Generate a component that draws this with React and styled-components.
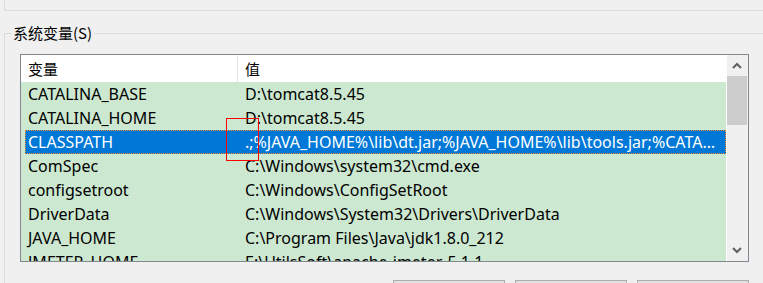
import React from "react";
import styled, { createGlobalStyle } from "styled-components";

const Global = createGlobalStyle`
  html, body { margin: 0; padding: 0; background: #f0f0f0; overflow: hidden; }
  body { font-family: "Noto Sans", "Noto Sans CJK SC", sans-serif; font-size: 16px; color: #000; }
`;

const Page = styled.div`
  width: 763px;
  height: 283px;
  overflow: hidden;
`;

const PrevGroup = styled.div`
  height: 10px;
  margin-left: 4px;
  border-left: 1px solid #dcdcdc;
  border-bottom: 1px solid #dcdcdc;
`;

const Group = styled.div`
  margin-top: 22px;
  margin-left: 4px;
  border-top: 1px solid #dcdcdc;
  border-left: 1px solid #dcdcdc;
  padding-left: 15px;
  height: 400px;
`;

const Legend = styled.div`
  display: block;
  width: fit-content;
  margin: -11px 0 0 -9px;
  padding: 0 2px;
  background: #f0f0f0;
  font-family: "Noto Sans CJK SC", "Noto Sans", sans-serif;
  font-size: 15px;
  line-height: 20px;
  height: 20px;
`;

const ListBox = styled.div`
  margin-top: 11px;
  width: 729px;
  height: 208px;
  box-sizing: border-box;
  border: 1px solid #828790;
  display: grid;
  grid-template-columns: 705px 1fr;
  background: #cde8d0;
  overflow: hidden;
`;

const Content = styled.div`
  position: relative;
  overflow: hidden;
`;

const HeaderRow = styled.div`
  display: grid;
  grid-template-columns: 217px 1fr;
  height: 27px;
  background: #fff;
`;

const HeaderCell = styled.div`
  display: flex;
  align-items: center;
  padding: 0 0 1px 7px;
  font-family: "Noto Sans CJK SC", "Noto Sans", sans-serif;
  font-size: 15px;
  border-right: ${(p) => (p.$divider ? "1px solid #e5e5e5" : "none")};
`;

const Row = styled.div`
  display: grid;
  grid-template-columns: ${(p) => (p.$selected ? "213px" : "217px")} 1fr;
  height: 24px;
  line-height: 20px;
  padding-bottom: 1px;
  align-items: center;
  box-sizing: border-box;
  margin-left: ${(p) => (p.$selected ? "4px" : "0")};
  background: ${(p) => (p.$selected ? "#0078d7" : "transparent")};
  color: ${(p) => (p.$selected ? "#fff" : "#000")};
  outline: ${(p) => (p.$selected ? "1px dotted #ff8728" : "none")};
  outline-offset: -1px;
`;

const NameCell = styled.div`
  padding-left: ${(p) => (p.$selected ? "3px" : "7px")};
  white-space: nowrap;
  overflow: hidden;
`;

const ValueCell = styled.div`
  padding-left: 7px;
  padding-right: 6px;
  white-space: nowrap;
  overflow: hidden;
  text-overflow: ellipsis;
`;

const Scrollbar = styled.div`
  background: #f0f0f0;
  border-left: 1px solid #fff;
  display: flex;
  flex-direction: column;
  padding-right: 1px;
`;

const ArrowBtn = styled.div`
  height: 21px;
  display: flex;
  align-items: center;
  justify-content: center;
`;

const Thumb = styled.div`
  height: 49px;
  background: #cdcdcd;
`;

const Track = styled.div`
  flex: 1;
`;

const Annotation = styled.div`
  position: absolute;
  left: 205px;
  top: 63px;
  width: 31px;
  height: 41px;
  border: 1px solid #f00;
  pointer-events: none;
`;

const Buttons = styled.div`
  display: flex;
  justify-content: flex-end;
  gap: 10px;
  width: 729px;
  margin-top: 18px;
`;

const Button = styled.div`
  width: 112px;
  height: 23px;
  box-sizing: border-box;
  border: 1px solid #adadad;
  background: #e1e1e1;
`;

const rows = [
  ["CATALINA_BASE", "D:\\tomcat8.5.45"],
  ["CATALINA_HOME", "D:\\tomcat8.5.45"],
  ["CLASSPATH", ".;%JAVA_HOME%\\lib\\dt.jar;%JAVA_HOME%\\lib\\tools.jar;%CATALINA_HOME%\\lib\\servlet-api.jar", true],
  ["ComSpec", "C:\\Windows\\system32\\cmd.exe"],
  ["configsetroot", "C:\\Windows\\ConfigSetRoot"],
  ["DriverData", "C:\\Windows\\System32\\Drivers\\DriverData"],
  ["JAVA_HOME", "C:\\Program Files\\Java\\jdk1.8.0_212"],
  ["JMETER_HOME", "E:\\UtilsSoft\\apache-jmeter-5.1.1"],
];

const Chevron = ({ up }) => (
  <svg width="10" height="7" viewBox="0 0 10 7">
    <path
      d={up ? "M1 6 L5 2 L9 6" : "M1 1 L5 5 L9 1"}
      fill="none"
      stroke="#606060"
      strokeWidth="2"
    />
  </svg>
);

export default function App() {
  return (
    <Page>
      <Global />
      <PrevGroup />
      <Group>
        <Legend>系统变量(S)</Legend>
        <ListBox>
          <Content>
            <HeaderRow>
              <HeaderCell $divider>变量</HeaderCell>
              <HeaderCell>值</HeaderCell>
            </HeaderRow>
            {rows.map(([n, v, sel]) => (
              <Row key={n} $selected={sel}>
                <NameCell $selected={sel}>{n}</NameCell>
                <ValueCell $selected={sel}>{v}</ValueCell>
              </Row>
            ))}
            <Annotation />
          </Content>
          <Scrollbar>
            <ArrowBtn><Chevron up /></ArrowBtn>
            <Thumb />
            <Track />
            <ArrowBtn><Chevron /></ArrowBtn>
          </Scrollbar>
        </ListBox>
        <Buttons>
          <Button />
          <Button />
          <Button />
        </Buttons>
      </Group>
    </Page>
  );
}
